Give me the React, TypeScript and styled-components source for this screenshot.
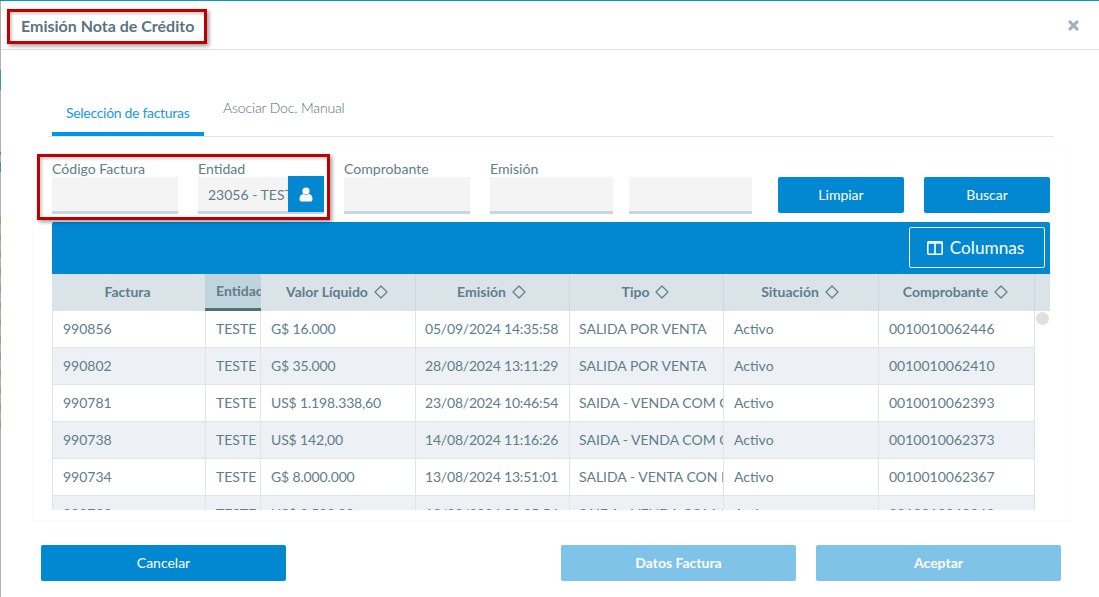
import React from "react";
import styled, { createGlobalStyle } from "styled-components";

const Global = createGlobalStyle`
  html, body { margin: 0; padding: 0; background: #fff; }
  * { box-sizing: border-box; }
`;

const Dialog = styled.div`
  position: relative;
  width: 1099px;
  height: 597px;
  overflow: hidden;
  background: #fff;
  border-top: 1px solid #0095e5;
  padding-left: 1px;
  font-family: Lato, "Open Sans", sans-serif;
  color: #607d8b;
  display: flex;
  flex-direction: column;
`;

const PageEdge = styled.div`
  position: absolute;
  left: 0;
  top: 0;
  bottom: 0;
  width: 1px;
  background:
    repeating-linear-gradient(
      to bottom,
      #8fa86c 0 7px,
      #b0b0b0 7px 17px
    ) 0 216px / 1px 220px no-repeat,
    linear-gradient(
      to bottom,
      #b0b0b0 0 69px,
      #3fa07c 69px 89px,
      #b0b0b0 89px 151px,
      #3fa07c 151px 154px,
      #b0b0b0 154px 161px,
      #3fa07c 161px 171px,
      #b0b0b0 171px
    );
`;

const Header = styled.header`
  height: 49px;
  flex: none;
  border-bottom: 1px solid #e0e0e0;
  display: flex;
  align-items: center;
  justify-content: space-between;
  padding: 0 20px 0 20px;
`;

const Title = styled.h1`
  margin: 0;
  font-size: 16px;
  font-weight: 700;
  color: #5b727f;
`;

const Close = styled.svg`
  width: 11px;
  height: 11px;
  display: block;
`;

const Tabs = styled.nav`
  display: flex;
  flex: none;
  width: 1006px;
  height: 87px;
  margin-left: 47px;
  border-bottom: 1px solid #dfe3e5;
  align-items: flex-end;
`;

const Tab = styled.div<{ $active?: boolean }>`
  height: 41px;
  margin-left: ${(p) => (p.$active ? "4px" : "0")};
  width: ${(p) => (p.$active ? "152px" : "auto")};
  padding: ${(p) => (p.$active ? "9px 0 0 14px" : "4px 0 0 19px")};
  font-size: 14px;
  letter-spacing: ${(p) => (p.$active ? "-0.3px" : "-0.15px")};
  font-weight: ${(p) => (p.$active ? 400 : 300)};
  color: ${(p) => (p.$active ? "#2196e3" : "#546e7a")};
  border-bottom: ${(p) => (p.$active ? "4px solid #0095e5" : "none")};
`;

const Panel = styled.section`
  flex: none;
  width: 1039px;
  height: 375px;
  margin: 9px 0 0 31px;
  padding: 13px 0 0 19px;
  border: 1px solid #fbfbfb;
`;

const Filters = styled.div`
  display: flex;
  height: 54px;
`;

const Field = styled.div<{ $w?: number; $gap?: number }>`
  width: ${(p) => p.$w ?? 126}px;
  margin-right: ${(p) => p.$gap ?? 20}px;
  flex: none;
  display: flex;
  flex-direction: column;
`;

const Label = styled.label`
  height: 17px;
  font-size: 14.1px;
  line-height: 17px;
  color: #607d8b;
  white-space: nowrap;
`;

const Input = styled.div`
  position: relative;
  height: 37px;
  background: #f4f4f4;
  border-bottom: 3px solid #c8d6de;
  font-size: 14px;
  line-height: 35px;
  padding-left: 10px;
  color: #607d8b;
  white-space: nowrap;
`;

const ClippedValue = styled.div`
  width: 80px;
  overflow: hidden;
`;

const UserButton = styled.div`
  position: absolute;
  right: 0;
  top: -1px;
  width: 36px;
  height: 36px;
  background: #0288d1;
  display: flex;
  align-items: center;
  justify-content: center;
`;

const Btn = styled.button<{ $w: number; $off?: boolean }>`
  width: ${(p) => p.$w}px;
  height: 36px;
  border: none;
  border-radius: 2px;
  background: ${(p) => (p.$off ? "#7fc3e8" : "#0288d1")};
  color: #fff;
  font-family: inherit;
  font-size: 14px;
  font-weight: ${(p) => (p.$off ? 700 : 400)};
  padding: 0 0 2px;
  flex: none;
`;

const Table = styled.div`
  margin-top: 8px;
  width: 998px;
  height: 288px;
  overflow: hidden;
`;

const Toolbar = styled.div`
  height: 52px;
  background: #0288d1;
  border-radius: 2px 2px 0 0;
  display: flex;
  justify-content: flex-end;
  padding: 5px 5px 0 0;
`;

const ColumnsBtn = styled.div`
  width: 136px;
  height: 41px;
  border: 1px solid #fff;
  border-radius: 2px;
  color: #fff;
  font-size: 17.2px;
  display: flex;
  align-items: center;
  justify-content: center;
  gap: 7px;
  padding-right: 3px;
`;

const HeadRow = styled.div`
  display: grid;
  grid-template-columns: 153px 56px 154px 154px 154px 155px 156px 16px;
  height: 37px;
  background: #dae3e8;
`;

const HeadCell = styled.div<{ $sel?: boolean; $line?: boolean }>`
  display: flex;
  align-items: center;
  justify-content: ${(p) => (p.$sel ? "flex-start" : "center")};
  gap: 6px;
  font-size: 14px;
  font-weight: 700;
  color: #607d8b;
  overflow: hidden;
  white-space: nowrap;
  padding: ${(p) => (p.$sel ? "0 0 1px 11px" : "0 2px 2px 0")};
  background: ${(p) => (p.$sel ? "#c0d4de" : "transparent")};
  border-left: ${(p) => (p.$line ? "1px solid #c8d8e0" : "none")};
  border-bottom: ${(p) => (p.$sel ? "3px solid #546e7a" : "none")};
`;

const Scroller = styled.div`
  position: relative;
  width: 998px;
`;

const Thumb = styled.div`
  position: absolute;
  top: 1px;
  right: 1px;
  width: 13px;
  height: 13px;
  border-radius: 50%;
  background: #e0e0e0;
`;

const Row = styled.div<{ $alt?: boolean }>`
  display: grid;
  grid-template-columns: 153px 55px 155px 154px 154px 155px 156px;
  width: 983px;
  height: 37px;
  background: ${(p) => (p.$alt ? "#edf1f5" : "#fff")};
  border-bottom: 1px solid #dde5ea;
  border-left: 1px solid #dde5ea;
`;

const Cell = styled.div<{ $pad: number; $track: number }>`
  font-size: 14px;
  line-height: 36px;
  padding-left: ${(p) => p.$pad}px;
  letter-spacing: ${(p) => p.$track}px;
  color: #607d8b;
  overflow: hidden;
  white-space: nowrap;
  border-right: 1px solid #dde5ea;
`;

const Footer = styled.footer`
  display: flex;
  flex: none;
  padding: 24px 38px 0 40px;
`;

const Spacer = styled.div`
  flex: 1;
`;

const Gap = styled.div<{ $w: number }>`
  width: ${(p) => p.$w}px;
  flex: none;
`;

const Callout = styled.div<{ $x: number; $y: number; $w: number; $h: number }>`
  position: absolute;
  left: ${(p) => p.$x}px;
  top: ${(p) => p.$y}px;
  width: ${(p) => p.$w}px;
  height: ${(p) => p.$h}px;
  border: 3px solid #c00000;
  box-shadow: 2px 2px 4px rgba(0, 0, 0, 0.4), inset 2px 2px 3px rgba(0, 0, 0, 0.2);
  pointer-events: none;
`;

const Sort = () => (
  <svg width="14" height="14" viewBox="0 0 14 14" fill="none" stroke="#607d8b" strokeWidth="1.2" strokeLinejoin="round">
    <path d="M7 1 L13 7 L7 13 L1 7 Z" />
  </svg>
);

const cellStyle = [
  { pad: 10, track: 0 },
  { pad: 10, track: 0 },
  { pad: 10, track: -0.15 },
  { pad: 9, track: -0.2 },
  { pad: 9, track: 0 },
  { pad: 10, track: 0 },
  { pad: 10, track: 0 },
];

const rows = [
  ["990856", "TESTE", "G$ 16.000", "05/09/2024 14:35:58", "SALIDA POR VENTA", "Activo", "0010010062446"],
  ["990802", "TESTE", "G$ 35.000", "28/08/2024 13:11:29", "SALIDA POR VENTA", "Activo", "0010010062410"],
  ["990781", "TESTE", "US$ 1.198.338,60", "23/08/2024 10:46:54", "SAIDA - VENDA COM CONTRATO", "Activo", "0010010062393"],
  ["990738", "TESTE", "US$ 142,00", "14/08/2024 11:16:26", "SAIDA - VENDA COM CONTRATO", "Activo", "0010010062373"],
  ["990734", "TESTE", "G$ 8.000.000", "13/08/2024 13:51:01", "SALIDA - VENTA CON PRECIO", "Activo", "0010010062367"],
  ["990733", "TESTE", "US$ 2.500,00", "13/08/2024 08:35:54", "SAIDA - VENDA COM A", "Activo", "0010010062360"],
];

export default function App() {
  return (
    <Dialog>
      <Global />
      <PageEdge />
      <Header>
        <Title>Emisión Nota de Crédito</Title>
        <Close viewBox="0 0 12 12">
          <path d="M2.2 2.2 L9.8 9.8 M9.8 2.2 L2.2 9.8" stroke="#9fb0ba" strokeWidth="3.4" strokeLinecap="round" />
        </Close>
      </Header>
      <Tabs>
        <Tab $active>Selección de facturas</Tab>
        <Tab>Asociar Doc. Manual</Tab>
      </Tabs>
      <Panel>
        <Filters>
          <Field>
            <Label>Código Factura</Label>
            <Input />
          </Field>
          <Field>
            <Label>Entidad</Label>
            <Input>
              <ClippedValue>23056 - TESTE</ClippedValue>
              <UserButton>
                <svg width="14" height="15" viewBox="0 0 14 15" fill="#fff">
                  <circle cx="7" cy="4" r="3.6" />
                  <path d="M0.5 12 C0.5 9 2 7.2 4 7 C5 8 9 8 10 7 C12 7.2 13.5 9 13.5 12 C13.5 14 12.5 14.6 11.5 14.6 H2.5 C1.5 14.6 0.5 14 0.5 12 Z" />
                </svg>
              </UserButton>
            </Input>
          </Field>
          <Field>
            <Label>Comprobante</Label>
            <Input />
          </Field>
          <Field $w={123} $gap={16}>
            <Label>Emisión</Label>
            <Input />
          </Field>
          <Field $w={123} $gap={26}>
            <Label>&nbsp;</Label>
            <Input />
          </Field>
          <Field $gap={20}>
            <Label>&nbsp;</Label>
            <Btn $w={126}>Limpiar</Btn>
          </Field>
          <Field $gap={0}>
            <Label>&nbsp;</Label>
            <Btn $w={126}>Buscar</Btn>
          </Field>
        </Filters>
        <Table>
          <Toolbar>
            <ColumnsBtn>
              <svg width="16" height="14" viewBox="0 0 16 14" fill="none" stroke="#fff" strokeWidth="1.6">
                <rect x="0.8" y="0.8" width="14.4" height="12.4" rx="1" />
                <path d="M8 1 V13 M1 2 H15" />
              </svg>
              Columnas
            </ColumnsBtn>
          </Toolbar>
          <HeadRow>
            <HeadCell>Factura</HeadCell>
            <HeadCell $sel>Entidad</HeadCell>
            <HeadCell>
              Valor Líquido <Sort />
            </HeadCell>
            <HeadCell $line>
              Emisión <Sort />
            </HeadCell>
            <HeadCell $line>
              Tipo <Sort />
            </HeadCell>
            <HeadCell $line>
              Situación <Sort />
            </HeadCell>
            <HeadCell $line>
              Comprobante <Sort />
            </HeadCell>
            <HeadCell $line />
          </HeadRow>
          <Scroller>
            <Thumb />
            {rows.map((r, i) => (
              <Row key={r[0]} $alt={i % 2 === 1}>
                {r.map((c, j) => (
                  <Cell key={j} $pad={cellStyle[j].pad} $track={cellStyle[j].track}>
                    {c}
                  </Cell>
                ))}
              </Row>
            ))}
          </Scroller>
        </Table>
      </Panel>
      <Footer>
        <Btn $w={245}>Cancelar</Btn>
        <Spacer />
        <Btn $w={235} $off>
          Datos Factura
        </Btn>
        <Gap $w={20} />
        <Btn $w={245} $off>
          Aceptar
        </Btn>
      </Footer>
      <Callout $x={7} $y={8} $w={200} $h={35} />
      <Callout $x={37} $y={153} $w={293} $h={66} />
    </Dialog>
  );
}
